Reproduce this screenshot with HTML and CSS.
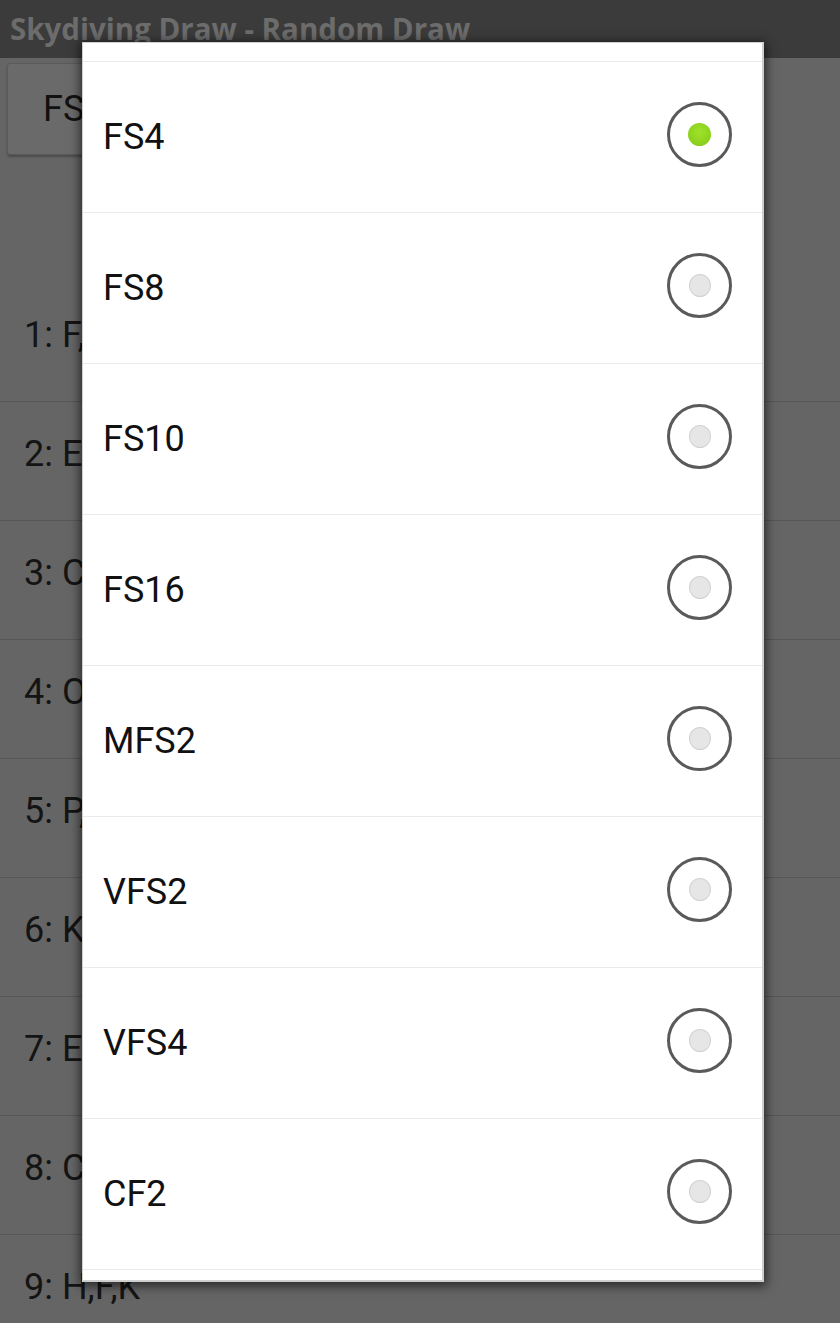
FILE: index.html
```html
<!DOCTYPE html>
<html lang="en">
<head>
    <meta charset="UTF-8">
    <title>Skydiving Draw - Random Draw</title>
    <link rel="stylesheet" href="styles.css">
</head>
<body>
    <div class="app">
        <div class="titulo">Skydiving Draw - Random Draw</div>

        <div class="barra">
            <button class="boton">FS4</button>
        </div>

        <ul class="sorteo">
            <li>1: F,A,D</li>
            <li>2: E,B,J</li>
            <li>3: C,L,M</li>
            <li>4: O,G,N</li>
            <li>5: P,Q,D</li>
            <li>6: K,A,B</li>
            <li>7: E,J,L</li>
            <li>8: C,O,G</li>
            <li>9: H,F,K</li>
        </ul>
    </div>

    <div class="dialogo">
        <div class="tope"></div>
        <div class="opcion"><span>FS4</span><span class="radio marcado"></span></div>
        <div class="opcion"><span>FS8</span><span class="radio"></span></div>
        <div class="opcion"><span>FS10</span><span class="radio"></span></div>
        <div class="opcion"><span>FS16</span><span class="radio"></span></div>
        <div class="opcion"><span>MFS2</span><span class="radio"></span></div>
        <div class="opcion"><span>VFS2</span><span class="radio"></span></div>
        <div class="opcion"><span>VFS4</span><span class="radio"></span></div>
        <div class="opcion"><span>CF2</span><span class="radio"></span></div>
    </div>
</body>
</html>
```

FILE: styles.css
```css
body {
    margin: 0;
    font-family: Roboto, 'Liberation Sans', sans-serif;
    background-color: #656565;
    height: 1323px;
    overflow: hidden;
}

.app {
    background-color: #656565;
}

.titulo {
    height: 58px;
    background-color: #3b3b3b;
    color: #6c6c6c;
    font-family: 'Open Sans', Roboto, sans-serif;
    font-weight: 700;
    font-size: 29.5px;
    line-height: 58px;
    padding-left: 10px;
    box-sizing: border-box;
    white-space: nowrap;
}

.barra {
    padding: 5px 8px 0 7px;
    height: 225px;
    box-sizing: border-box;
}

.boton {
    width: 260px;
    height: 92px;
    background-color: #6a6a6a;
    border: 1px solid #5a5a5a;
    border-radius: 3px;
    box-shadow: 0 2px 2px rgba(0, 0, 0, 0.25);
    font-family: Roboto, 'Liberation Sans', sans-serif;
    font-size: 36px;
    color: #111;
    text-align: left;
    padding-left: 35px;
}

.sorteo {
    list-style: none;
    margin: 0;
    padding: 0;
}

.sorteo li {
    height: 118px;
    line-height: 105px;
    border-bottom: 1px solid #575757;
    padding-left: 24px;
    font-size: 36px;
    color: #141414;
}

.dialogo {
    position: absolute;
    left: 82px;
    top: 42px;
    width: 682px;
    height: 1240px;
    box-sizing: border-box;
    background-color: #fff;
    border: 2px solid #cfcfcf;
    border-top-width: 1px;
    border-left-width: 1px;
    box-shadow: 0 2px 10px 2px rgba(0, 0, 0, 0.6);
    overflow: hidden;
}

.tope {
    height: 18px;
    border-bottom: 1px solid #ebebeb;
}

.opcion {
    height: 150px;
    border-bottom: 1px solid #ebebeb;
    display: flex;
    align-items: center;
    justify-content: space-between;
    padding-left: 20px;
    padding-right: 30px;
    font-size: 36px;
    color: #111;
}

.radio {
    width: 59px;
    height: 59px;
    border: 3px solid #5a5a5a;
    border-radius: 50%;
    display: flex;
    align-items: center;
    justify-content: center;
    margin-bottom: 6px;
}

.radio::after {
    content: "";
    width: 20px;
    height: 21px;
    border-radius: 50%;
    background-color: #e6e6e6;
    border: 1px solid #d2d2d2;
}

.radio.marcado::after {
    width: 23px;
    height: 23px;
    border: none;
    background: radial-gradient(circle at 50% 40%, #9ee22a, #82c816);
}
```
